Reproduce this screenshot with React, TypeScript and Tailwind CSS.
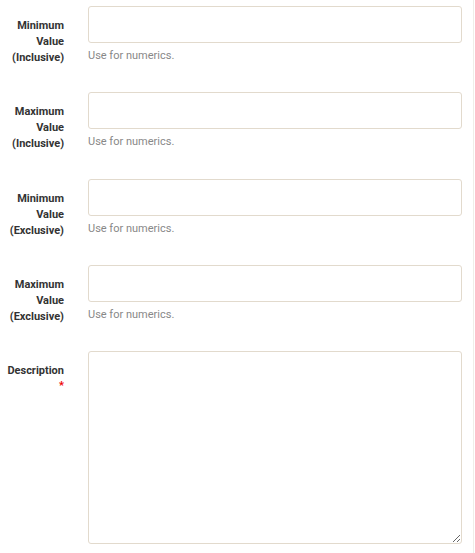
const rows = [
  { label: ['Minimum', 'Value', '(Inclusive)'] },
  { label: ['Maximum', 'Value', '(Inclusive)'] },
  { label: ['Minimum', 'Value', '(Exclusive)'] },
  { label: ['Maximum', 'Value', '(Exclusive)'] },
]

export default function App() {
  return (
    <div className="w-[475px] h-[553px] bg-white font-['Roboto',sans-serif] overflow-hidden">
      <div className="w-[474px] h-full border-r border-[#f0ede8] pt-[6px]">
        {rows.map((row, i) => (
          <div key={i} className="flex mb-[26.25px]">
            <label className="w-[64px] shrink-0 pt-[12px] text-right text-[11px] leading-[16px] font-bold text-[#333]">
              {row.label.map((l) => (
                <div key={l}>{l}</div>
              ))}
            </label>
            <div className="ml-[24px] w-[374px]">
              <input
                type="text"
                className="block w-full h-[37px] px-2 border border-[#e2dacd] rounded-[3px] bg-white outline-none"
              />
              <p className="mt-[6px] mb-[1px] text-[11px] leading-[14px] text-[#888]">Use for numerics.</p>
            </div>
          </div>
        ))}
        <div className="flex">
          <label className="w-[64px] shrink-0 pt-[12px] text-right text-[11px] leading-[16px] font-bold text-[#333]">
            <div>Description</div>
            <div className="text-[#e00] leading-[14px]">*</div>
          </label>
          <div className="ml-[24px] w-[374px]">
            <textarea className="block w-full h-[193px] p-2 border border-[#e2dacd] rounded-[3px] bg-white outline-none" />
          </div>
        </div>
      </div>
    </div>
  )
}
